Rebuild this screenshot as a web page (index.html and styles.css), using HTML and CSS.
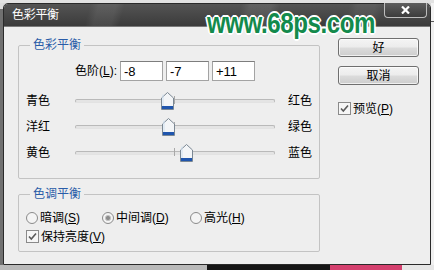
FILE: index.html
```html
<!DOCTYPE html>
<html lang="zh">
<head>
<meta charset="utf-8">
<title>色彩平衡</title>
<link rel="stylesheet" href="styles.css">
</head>
<body>
<div class="screen">
  <div class="top-strip"></div>
  <div class="middle">
    <div class="edge-left"></div>
    <div class="window">
      <div class="titlebar">
        <span class="title">色彩平衡</span>
        <div class="close">
          <svg width="9" height="8" viewBox="0 0 9 8"><path d="M1 0.5 L8 7.5 M8 0.5 L1 7.5" stroke="#ffffff" stroke-width="2.2" fill="none"/></svg>
        </div>
      </div>
      <div class="watermark">www.68ps.com</div>
      <div class="content">
        <div class="left-col">
          <fieldset class="group group-color">
            <legend>色彩平衡</legend>
            <div class="levels">
              <span class="levels-label">色阶(<u>L</u>):</span>
              <input class="num" type="text" value="-8">
              <input class="num" type="text" value="-7">
              <input class="num" type="text" value="+11">
            </div>
            <div class="slider-row">
              <span class="lbl">青色</span>
              <div class="track">
                <span class="tick"></span>
                <svg class="thumb" style="left:85px" width="13" height="18" viewBox="0 0 13 18"><path d="M6.5 0.5 L12.5 6 V17.5 H0.5 V6 Z" fill="#f3f5f7" stroke="#7b8894"/><path d="M2 2.5 L2 14" stroke="#cfe0f0"/><rect x="1" y="14" width="11" height="3" fill="#1f55ad"/></svg>
              </div>
              <span class="lbl-r">红色</span>
            </div>
            <div class="slider-row">
              <span class="lbl">洋红</span>
              <div class="track">
                <span class="tick"></span>
                <svg class="thumb" style="left:86px" width="13" height="18" viewBox="0 0 13 18"><path d="M6.5 0.5 L12.5 6 V17.5 H0.5 V6 Z" fill="#f3f5f7" stroke="#7b8894"/><path d="M2 2.5 L2 14" stroke="#cfe0f0"/><rect x="1" y="14" width="11" height="3" fill="#1f55ad"/></svg>
              </div>
              <span class="lbl-r">绿色</span>
            </div>
            <div class="slider-row">
              <span class="lbl">黄色</span>
              <div class="track">
                <span class="tick"></span>
                <svg class="thumb" style="left:104px" width="13" height="18" viewBox="0 0 13 18"><path d="M6.5 0.5 L12.5 6 V17.5 H0.5 V6 Z" fill="#f3f5f7" stroke="#7b8894"/><path d="M2 2.5 L2 14" stroke="#cfe0f0"/><rect x="1" y="14" width="11" height="3" fill="#1f55ad"/></svg>
              </div>
              <span class="lbl-r">蓝色</span>
            </div>
          </fieldset>
          <fieldset class="group group-tone">
            <legend>色调平衡</legend>
            <div class="radio-row">
              <span class="opt opt-1">
                <svg class="radio" width="12" height="12" viewBox="0 0 12 12"><circle cx="6" cy="6" r="5.5" fill="#f4f4f4" stroke="#8a8a8a"/></svg>
                <span>暗调(<u>S</u>)</span>
              </span>
              <span class="opt opt-2">
                <svg class="radio" width="12" height="12" viewBox="0 0 12 12"><circle cx="6" cy="6" r="5.5" fill="#f4f4f4" stroke="#8a8a8a"/><circle cx="6" cy="6" r="2.6" fill="#8c8c8c" stroke="#c4c4c4" stroke-width="1"/></svg>
                <span>中间调(<u>D</u>)</span>
              </span>
              <span class="opt">
                <svg class="radio" width="12" height="12" viewBox="0 0 12 12"><circle cx="6" cy="6" r="5.5" fill="#f4f4f4" stroke="#8a8a8a"/></svg>
                <span>高光(<u>H</u>)</span>
              </span>
            </div>
            <div class="check-row">
              <svg class="checkbox" width="13" height="13" viewBox="0 0 13 13"><rect x="0.5" y="0.5" width="12" height="12" fill="#f6f6f6" stroke="#8a8a8a"/><path d="M3 6.5 L5.3 9 L10 3.5" stroke="#5a5a5a" stroke-width="1.6" fill="none"/></svg>
              <span>保持亮度(<u>V</u>)</span>
            </div>
          </fieldset>
        </div>
        <div class="right-col">
          <button class="btn" type="button">好</button>
          <button class="btn" type="button">取消</button>
          <div class="check-row preview">
            <svg class="checkbox" width="13" height="13" viewBox="0 0 13 13"><rect x="0.5" y="0.5" width="12" height="12" fill="#f6f6f6" stroke="#8a8a8a"/><path d="M3 6.5 L5.3 9 L10 3.5" stroke="#5a5a5a" stroke-width="1.6" fill="none"/></svg>
            <span>预览(<u>P</u>)</span>
          </div>
        </div>
      </div>
    </div>
    <div class="edge-right"></div>
  </div>
  <div class="bottom-strip">
    <span class="seg seg-gray"></span>
    <span class="seg seg-dark"></span>
    <span class="seg seg-pink"></span>
    <span class="seg seg-light"></span>
  </div>
</div>
</body>
</html>
```

FILE: styles.css
```css
* { box-sizing: border-box; }
html, body { margin: 0; padding: 0; }
body {
  width: 434px;
  height: 270px;
  overflow: hidden;
  font-family: "Liberation Sans", "Noto Sans CJK SC", sans-serif;
  font-size: 12px;
  line-height: 12px;
  color: #000;
}
.screen {
  display: flex;
  flex-direction: column;
  width: 434px;
  height: 270px;
  background: #d6d6d6;
}
.top-strip { height: 3px; background: #e2e2e2; }
.middle { display: flex; height: 262px; }
.edge-left { width: 3px; background: linear-gradient(#dcdcdc 0 6px, #707070 6px); }
.edge-right { width: 3px; background: linear-gradient(#f2f2f2 0 18px, #5a5a5a 18px 19px, #f0f0f0 19px); }
.window {
  position: relative;
  width: 428px;
  display: flex;
  flex-direction: column;
  border: 1px solid #2a2a2a;
  border-radius: 5px 5px 0 0;
  background: #eeeeee;
}
.titlebar {
  height: 23px;
  display: flex;
  align-items: center;
  padding-left: 8px;
  border-radius: 4px 4px 0 0;
  border-bottom: 1px solid #7a7a7a;
  background:
    linear-gradient(105deg, transparent 0 20%, rgba(255,255,255,0.07) 22% 26%, transparent 28% 55%, rgba(255,255,255,0.08) 57% 62%, transparent 64% 80%, rgba(255,255,255,0.06) 82% 86%, transparent 88%),
    linear-gradient(#545454, #3b3b3b);
}
.title { color: #ffffff; font-size: 12px; line-height: 12px; letter-spacing: -0.3px; }
.close {
  margin-left: auto;
  margin-right: 3px;
  align-self: flex-start;
  margin-top: -1px;
  width: 43px;
  height: 15px;
  border: 1px solid #bdbdbd;
  border-top: none;
  border-radius: 0 0 4px 4px;
  background: linear-gradient(#5e5e5e, #3c3c3c);
  display: flex;
  align-items: center;
  justify-content: center;
}
.watermark {
  position: absolute;
  left: 203px;
  top: 5px;
  font-family: "Liberation Sans", sans-serif;
  font-weight: bold;
  font-size: 29px;
  line-height: 29px;
  color: #138a4c;
  transform: scaleX(0.83);
  transform-origin: left top;
  letter-spacing: -0.5px;
  text-shadow: 1px 0 0 #fff, -1px 0 0 #fff, 0 1px 0 #fff, 0 -1px 0 #fff, 1px 1px 0 #fff, -1px -1px 0 #fff, 1px -1px 0 #fff, -1px 1px 0 #fff, 2px 0 0 #fff, -2px 0 0 #fff, 0 2px 0 #fff, 0 -2px 0 #fff;
  white-space: nowrap;
}
.content {
  flex: 1;
  display: flex;
  padding: 12px 0 0 14px;
}
.left-col { width: 302px; display: flex; flex-direction: column; }
.group {
  margin: 0;
  padding: 0;
  border: 1px solid #c3c3c3;
  border-radius: 2px;
  width: 302px;
  min-width: 0;
}
.group legend {
  margin-left: 11px;
  padding: 0 3px;
  color: #2a5ca8;
  font-size: 12px;
  line-height: 12px;
}
.group-color { padding-bottom: 12px; }
.group-tone { margin-top: 9px; padding-bottom: 8px; }
.levels {
  display: flex;
  align-items: center;
  margin-top: 10px;
  padding-left: 50px;
}
.levels-label { width: 48px; text-align: right; margin-right: 3px; white-space: nowrap; }
.num {
  width: 43px;
  height: 20px;
  margin: 0 3px 0 0;
  padding: 0 3px;
  border: 1px solid #a3a3a3;
  border-top-color: #7d7d7d;
  background: #ffffff;
  font-family: "Liberation Sans", sans-serif;
  font-size: 13px;
  color: #000;
  outline: none;
}
.slider-row {
  display: flex;
  align-items: center;
  height: 26px;
  padding-left: 7px;
}
.levels + .slider-row { margin-top: 7px; }
.lbl { width: 49px; }
.track {
  position: relative;
  width: 200px;
  height: 4px;
  border: 1px solid #b9b9b9;
  border-bottom-color: #e2e2e2;
  border-radius: 2px;
  background: #e4e4e4;
}
.tick {
  position: absolute;
  left: 98px;
  top: -4px;
  width: 1px;
  height: 8px;
  background: #a8a8a8;
}
.thumb { position: absolute; top: -8px; display: block; }
.lbl-r { margin-left: 13px; }
.radio-row {
  display: flex;
  align-items: center;
  margin-top: 11px;
  padding-left: 7px;
  height: 13px;
}
.opt { display: flex; align-items: center; gap: 2px; white-space: nowrap; }
.opt-1 { width: 76px; }
.opt-2 { width: 88px; }
.radio, .checkbox { display: block; flex: none; }
.check-row {
  display: flex;
  align-items: center;
  gap: 2px;
  margin-top: 6px;
  padding-left: 7px;
  height: 13px;
  white-space: nowrap;
}
.right-col {
  margin-left: 18px;
  display: flex;
  flex-direction: column;
  align-items: flex-start;
  margin-top: -1px;
}
.btn {
  width: 81px;
  height: 19px;
  padding: 0;
  margin: 0;
  border: 1px solid #6f6f6f;
  border-radius: 3px;
  background: linear-gradient(#f4f4f4 0%, #ececec 48%, #dcdcdc 52%, #cdcdcd 100%);
  box-shadow: inset 0 0 0 1px rgba(255,255,255,0.7);
  font-family: "Liberation Sans", "Noto Sans CJK SC", sans-serif;
  font-size: 12px;
  line-height: 12px;
  color: #000;
}
.btn + .btn { margin-top: 9px; }
.preview { margin-top: 17px; padding-left: 0; }
.bottom-strip { display: flex; height: 5px; }
.seg { display: block; height: 5px; }
.seg-gray { width: 207px; background: #b9b9b9; }
.seg-dark { width: 123px; background: #161616; }
.seg-pink { width: 72px; background: #d4406e; }
.seg-light { width: 32px; background: #e6e6e6; }
u { text-decoration: underline; text-underline-offset: 1px; }
```
